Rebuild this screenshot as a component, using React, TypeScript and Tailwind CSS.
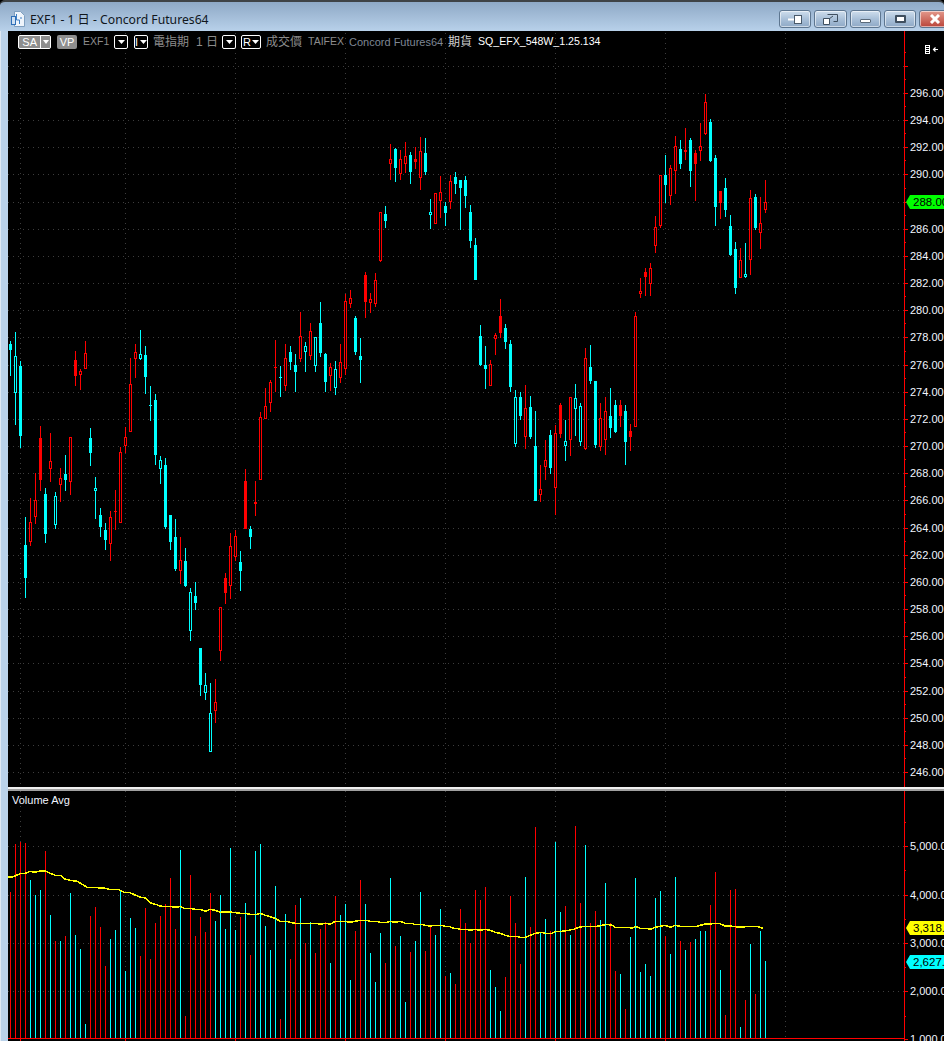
import React from "react";

type C = [string, number, number, number, number];
const candles: C[] = [
["C",341,344,350,376],["c",332,356,393,425],["C",361,366,436,448],["C",517,545,578,598],["r",498,522,542,546],["r",473,500,517,524],["R",426,438,480,491],["C",488,494,534,543],["r",433,461,469,482],["c",492,496,525,529],
["r",468,478,485,502],["C",455,474,480,491],["r",437,437,482,495],["R",351,360,376,386],["r",369,371,375,390],["r",341,353,369,369],["C",428,438,453,466],["c",477,488,491,519],["C",508,515,527,537],["C",523,530,540,550],
["r",511,517,544,561],["R",490,511,512,530],["r",447,452,523,523],["r",427,437,446,453],["r",358,384,432,432],["r",344,352,359,378],["c",330,354,359,360],["C",346,355,377,394],["C",386,405,406,421],["C",394,400,455,465],
["c",456,460,469,484],["C",458,465,527,529],["C",515,515,542,550],["C",519,537,569,571],["r",537,560,571,584],["C",548,561,586,587],["c",588,592,631,641],["C",582,596,603,610],["C",648,648,685,696],["c",673,685,693,700],
["c",683,713,752,752],["r",679,702,711,723],["r",607,607,651,661],["R",573,578,593,604],["r",533,546,586,599],["r",530,536,557,561],["C",551,562,571,591],["R",469,481,529,529],["C",526,529,537,549],["R",481,502,504,516],
["r",412,417,480,480],["r",388,406,419,419],["r",380,382,403,412],["R",340,367,368,392],["C",366,377,378,397],["r",344,358,386,391],["C",346,352,362,370],["C",354,365,372,392],["r",312,336,359,362],["c",342,346,352,372],
["r",323,331,356,360],["c",337,337,366,372],["C",302,323,353,357],["C",353,354,382,392],["r",363,367,376,391],["c",361,369,388,395],["r",344,362,378,383],["r",294,301,369,375],["r",290,298,304,308],["C",316,318,352,355],
["C",338,356,360,383],["R",272,275,302,318],["r",293,299,303,313],["r",273,280,304,307],["r",212,212,261,262],["C",206,214,221,228],["r",144,159,164,180],["C",148,149,168,182],["r",150,159,174,180],["r",142,156,164,173],
["C",152,155,172,184],["R",147,159,162,169],["r",137,151,178,190],["C",138,153,172,175],["c",199,212,215,229],["r",193,193,224,224],["r",176,192,201,218],["C",202,206,213,226],["r",175,181,202,209],["C",172,177,184,194],
["C",180,180,188,230],["C",176,180,196,208],["C",205,212,241,248],["C",238,245,280,280],["C",325,336,365,366],["C",346,365,369,389],["r",360,364,386,386],["r",333,335,339,355],["R",299,316,333,338],["C",324,328,342,349],
["C",340,344,387,392],["c",390,397,444,447],["C",392,397,416,420],["r",385,408,437,449],["C",396,407,437,439],["C",411,446,501,501],["r",465,489,495,502],["r",440,460,467,480],["C",430,435,468,474],["r",425,433,488,515],
["R",403,405,434,438],["c",420,441,446,461],["r",397,397,440,456],["c",384,398,409,436],["c",403,406,442,446],["r",348,358,449,450],["C",345,367,381,384],["C",381,381,445,448],["r",403,418,447,451],["r",397,411,440,455],
["C",388,416,428,438],["C",400,405,432,433],["R",400,405,416,427],["C",405,411,442,465],["R",424,431,437,451],["r",312,316,427,427],["r",278,291,294,298],["R",268,272,277,296],["r",263,268,284,296],["r",216,227,246,253],
["r",175,175,226,228],["C",155,175,185,203],["r",165,168,196,205],["r",136,146,171,194],["C",140,149,164,169],["R",128,150,152,160],["C",138,140,171,187],["R",150,153,164,201],["r",123,146,151,161],["r",94,102,134,135],
["C",119,122,161,162],["C",155,158,207,226],["R",191,191,203,219],["C",178,188,210,217],["C",215,226,255,256],["C",242,249,288,294],["r",248,260,278,278],["c",243,274,277,278],["r",190,198,260,275],["C",194,197,228,230],
["r",197,223,233,249],["r",180,202,210,213],
];

const volA =
  "r336 r192 r186 r189 c300 c345 c330 r213 c405 r483 c483 r468 c339 c465 c507 c732 r408 r381 r441 r558 c477 c450 c330 c573 c414 c444 r528 r384 r537 r429 r408 r372 r294 r447 c210 r708 r285 r468 r411 r456 r339 c423 c345 c447 c204 c450 r411 c369 r525 c213 c192 c438 c510 c318 r717 c402 r537";
const volB =
  "r255 c234 r369 c306 r399 r327 r306 c429 r228 c285 c252 c480 r333 r180 c252 c399 c486 c339 r429 c174 r378 c348 c546 r396 c363 c216 r393 r318 c345 c267 r468 c459 r492 r267 r309 r369 r210 r240 r201 c450 c501 c573 r471 r228 r309 r432 c171 r321 r21 c339 c297 r333 c66 c276 r258 c345 r18 r249 c75 r309 r273 c300 c189 r309 r453 c462 r567 c351 c174 c456 c432 c468 c234 c213 r348 c402 c171 r363 c390 r366 c357 c333";
const volC = "c453 r375 r276 c570 r705 r330 r327 c741 r660 c492 r642 c453 c543";

const parse = (s: string, base: number, start: number) =>
  s.split(" ").map((t, i) => ({
    x: start + i * 5,
    red: t[0] === "r",
    y: Math.round(base + Number(t.slice(1)) / 3),
  }));
const volumes = [...parse(volA, 780, 10), ...parse(volB, 820, 295), ...parse(volC, 780, 705)];

const avgA = [24,292,40,290,61,281,76,280,91,274,106,277,120,273,136,273,151,280,166,286,181,286,196,298,211,301,232,304,247,313,262,322,290,323,316,325,330,329,355,328,372,337,390,338,405,345,420,351,436,354,451,368,466,373,481,378,496,380,516,380,531,382,540,379,556,386,571,385,586,388,601,388,616,394,631,388,646,391,661,397,681,396,700,397,721,400,736,400,750,403,770,403,781,400,796,406,811,410,826,415,841,424,860,424,871,427,884,430];
const avgB = [0,310,66,310,76,313,91,310,106,313,121,304,151,304,166,307,181,304,196,301,216,301,226,304,246,304,256,307,276,307,286,304,301,307,316,304,331,310,351,310,356,313,381,313,391,316,406,319,416,316,441,316,451,319,461,319,476,325,486,325,496,328,516,328,526,331,541,328,556,331,571,328,586,331,601,337,616,340,631,346,641,349,666,349,676,352,691,352,706,346,721,340,741,337,751,340,771,340,781,334,801,334,821,331,836,328,851,322,866,319,906,319,921,316,936,313,951,316,961,322,1001,322,1011,325,1021,319,1036,325,1056,325,1066,328,1081,322,1096,319,1111,316,1126,322,1141,316,1156,319,1206,319,1216,316,1230,313];
const avgC = [10,433,40,431,60,431,75,438,100,439,120,442,145,439,170,439,190,445];
const pts = (a: number[], ox: number, oy: number) => {
  const out: string[] = [];
  for (let i = 0; i < a.length; i += 2) out.push(`${(ox + a[i] / 3).toFixed(1)},${(oy + a[i + 1] / 3).toFixed(1)}`);
  return out;
};
const avgLine = [...pts(avgA, 0, 780), ...pts(avgB, 295, 820), ...pts(avgC, 700, 780)].join(" ");

const gridX = [20, 125, 235, 345, 445, 555, 665, 785];
const RED = "#ff0000";
const CYAN = "#00ffff";
const GRID = "#3d3d3d";
const AXIS_FONT = "'Liberation Sans', sans-serif";

const priceY = (p: number) => Math.round(93 + ((296 - p) / 2) * 27.16);
const prices = Array.from({ length: 26 }, (_, i) => 296 - i * 2);

function Flag({ y, color, text }: { y: number; color: string; text: string }) {
  return (
    <g>
      <polygon points={`906,${y} 910,${y - 7} 944,${y - 7} 944,${y + 7} 910,${y + 7}`} fill={color} />
      <text x={913} y={y + 4} fontSize={11.5} fill="#000" fontFamily={AXIS_FONT}>
        {text}
      </text>
    </g>
  );
}

function PriceChart() {
  return (
    <svg width={936} height={756} viewBox="8 31 936 756" className="block">
      <g shapeRendering="crispEdges" stroke={GRID} strokeDasharray="1 4">
        {gridX.map((x) => (
          <line key={x} x1={x + 0.5} x2={x + 0.5} y1={33} y2={787} />
        ))}
        {[298, ...prices].map((p) => (
          <line key={p} x1={8} x2={904} y1={priceY(p) + 0.5} y2={priceY(p) + 0.5} />
        ))}
      </g>
      <g shapeRendering="crispEdges">
        {candles.map((c, i) => {
          const x = 10 + i * 5;
          const col = c[0] === "r" || c[0] === "R" ? RED : CYAN;
          const hollow = c[0] === "r" || c[0] === "c";
          const h = Math.max(1, c[3] - c[2]);
          return (
            <g key={i}>
              <rect x={x} y={c[1]} width={1} height={c[4] - c[1]} fill={col} />
              <rect x={x - 1} y={c[2]} width={3} height={h} fill={col} />
              {hollow && h > 2 && <rect x={x} y={c[2] + 1} width={1} height={h - 2} fill="#000" />}
            </g>
          );
        })}
      </g>
      <g shapeRendering="crispEdges" fill={RED}>
        <rect x={904} y={31} width={1} height={756} />
        {[298, ...prices].map((p) => (
          <rect key={p} x={904} y={priceY(p)} width={4} height={1} />
        ))}
        {[298, ...prices].map((p) => (
          <rect key={p} x={904} y={priceY(p) - 14} width={2} height={1} />
        ))}
      </g>
      {prices
        .filter((p) => p !== 288)
        .map((p) => (
          <text key={p} x={910} y={priceY(p) + 4} fontSize={11} fill="#f2f6ff" fontFamily={AXIS_FONT}>
            {p}.00
          </text>
        ))}
      <Flag y={202} color="#00ff00" text="288.00" />
      <g fill="none" stroke="#fff" strokeWidth={1} shapeRendering="crispEdges">
        <rect x={925.5} y={45.5} width={4} height={8} />
        <path d="M926 47.5h3M926 49.5h3M926 51.5h3" />
      </g>
      <path d="M934 49.5h4M935.5 47.5l-2 2 2 2" fill="none" stroke="#fff" strokeWidth={1.2} />
    </svg>
  );
}

function VolumeChart() {
  const ys = [846, 895, 943, 991, 1039];
  return (
    <svg width={936} height={250} viewBox="8 791 936 250" className="block">
      <g shapeRendering="crispEdges" stroke={GRID} strokeDasharray="1 4">
        {gridX.map((x) => (
          <line key={x} x1={x + 0.5} x2={x + 0.5} y1={791} y2={1038} />
        ))}
        {ys.slice(0, 4).map((y) => (
          <line key={y} x1={8} x2={904} y1={y + 0.5} y2={y + 0.5} />
        ))}
      </g>
      <g shapeRendering="crispEdges">
        {volumes.map((v) => (
          <rect key={v.x} x={v.x} y={v.y} width={1} height={1038 - v.y} fill={v.red ? RED : CYAN} />
        ))}
      </g>
      <polyline points={avgLine} fill="none" stroke="#ffff00" strokeWidth={1.5} shapeRendering="crispEdges" />
      <g shapeRendering="crispEdges" fill={RED}>
        <rect x={904} y={791} width={1} height={250} />
        <rect x={8} y={1038} width={896} height={1} />
        {gridX.slice(0, 7).map((x) => (
          <rect key={x} x={x} y={1038} width={1} height={3} />
        ))}
        {ys.map((y) => (
          <rect key={y} x={904} y={y} width={4} height={1} />
        ))}
        {[822, 870, 919, 967, 1016].map((y) => (
          <rect key={y} x={904} y={y} width={2} height={1} />
        ))}
      </g>
      {["5,000.0", "4,000.0", "3,000.0", "2,000.0", "1,000.0"].map((t, i) => (
        <text key={t} x={910} y={ys[i] + 4} fontSize={11} fill="#f2f6ff" fontFamily={AXIS_FONT}>
          {t}
        </text>
      ))}
      <Flag y={928} color="#ffff00" text="3,318.4" />
      <Flag y={962} color="#00ffff" text="2,627.0" />
      <text x={12} y={804} fontSize={11} fill="#f2f6ff" fontFamily={AXIS_FONT}>
        Volume Avg
      </text>
    </svg>
  );
}

function DropBox({ label }: { label?: string }) {
  return (
    <span
      className={`flex h-[14px] items-center justify-center rounded-[2px] border border-white bg-black text-[11px] leading-none text-white ${
        label === "R" ? "w-[20px]" : "w-[14px]"
      }`}
    >
      {label && <span className={label === "R" ? "mr-px" : "mr-[2px]"}>{label}</span>}
      <svg width={7} height={4} viewBox="0 0 7 4">
        <path d="M0 0h7L3.5 4z" fill="#fff" />
      </svg>
    </span>
  );
}

function Toolbar() {
  return (
    <div className="absolute left-[10px] top-[4px] flex h-[14px] items-center whitespace-nowrap font-['Liberation_Sans','Noto_Sans_CJK_TC',sans-serif] text-[10.5px] text-[#8c8c8c]">
      <span className="flex h-[14px] w-[33px] items-stretch overflow-hidden rounded-[2px] border border-white bg-[#8e8e8e] text-[11px] leading-[12px] text-white">
        <span className="w-[22px] text-center">SA</span>
        <span className="flex w-[10px] items-center justify-center border-l border-white bg-[#8e8e8e]">
          <svg width={6} height={4} viewBox="0 0 6 4">
            <path d="M0 0h6L3 4z" fill="#fff" />
          </svg>
        </span>
      </span>
      <span className="ml-[6px] h-[14px] w-[20px] rounded-[2px] bg-[#8e8e8e] text-center text-[11px] leading-[14px] text-white">VP</span>
      <span className="ml-[6px] w-[25px]">EXF1</span>
      <span className="ml-[6px]"><DropBox /></span>
      <span className="ml-[6px]"><DropBox label="I" /></span>
      <span className="ml-[5px] w-[37px] text-[12px]">電指期</span>
      <span className="ml-[6px] w-[20px] text-[12px]">1 日</span>
      <span className="ml-[6px]"><DropBox /></span>
      <span className="ml-[5px]"><DropBox label="R" /></span>
      <span className="ml-[5px] w-[36px] text-[12px]">成交價</span>
      <span className="ml-[6px] w-[35px]">TAIFEX</span>
      <span className="ml-[6px] w-[93px] text-[11px] text-[#7f8794]">Concord Futures64</span>
      <span className="ml-[6px] w-[24px] text-[12px] text-[#d0d0d0]">期貨</span>
      <span className="ml-[6px] text-[10.6px] text-white">SQ_EFX_548W_1.25.134</span>
    </div>
  );
}

function WinBtn({ children, w, danger }: { children: React.ReactNode; w: string; danger?: boolean }) {
  return (
    <span
      className={`flex h-[18px] items-center justify-center rounded-[3px] border border-[#5d7690] shadow-[inset_0_0_0_1px_rgba(255,255,255,0.55)] ${w} ${
        danger ? "bg-gradient-to-b from-[#e3998c] to-[#b9433a]" : "bg-gradient-to-b from-[#cfdeed] via-[#a9c0d8] to-[#8fa9c6]"
      }`}
    >
      {children}
    </span>
  );
}

function TitleBar() {
  return (
    <div className="flex h-[31px] shrink-0 items-start rounded-t-[5px] border-t-2 border-[#3f4346] bg-gradient-to-b from-[#8fa9c6] to-[#b8d1ea] pl-[11px]">
      <svg width={14} height={16} viewBox="0 0 14 16" className="mt-[9px]">
        <path d="M3.5.5h6l4 4v11h-10z" fill="#eef4fb" stroke="#7f9fbf" />
        <path d="M5.5 3v6h3v4M9 7h2" stroke="#3f7fc4" strokeWidth={1} fill="none" />
        <rect x={0.5} y={5.5} width={4} height={8} fill="#cfe0f2" stroke="#2f6fb8" />
      </svg>
      <span className="ml-[5px] mt-[9px] font-['Noto_Sans','Noto_Sans_CJK_TC',sans-serif] text-[12.2px] leading-[17px] text-[#10161c]">
        EXF1 - 1 日 - Concord Futures64
      </span>
      <div className="ml-auto mt-[8px] flex gap-[3px]">
        <WinBtn w="w-[32px]">
          <svg width={15} height={11} viewBox="0 0 15 11">
            <path d="M0 5.5h6" stroke="#fff" strokeWidth={2} />
            <rect x={6.5} y={1.5} width={7} height={8} fill="#fff" stroke="#4a5a6a" />
          </svg>
        </WinBtn>
        <WinBtn w="w-[33px]">
          <svg width={15} height={12} viewBox="0 0 15 12" fill="none" stroke="#3f4f5f">
            <path d="M4.5 1.5h10v7h-4" />
            <path d="M.5 5.5h6v6h-6z" fill="#fff" />
            <path d="M6 6l4-3" />
          </svg>
        </WinBtn>
        <WinBtn w="w-[31px]">
          <span className="mt-[4px] h-[4px] w-[11px] rounded-[1px] border border-[#5a6a7a] bg-white" />
        </WinBtn>
        <WinBtn w="w-[32px]">
          <span className="h-[8px] w-[11px] rounded-[1px] border-2 border-[#3f4f5f] bg-white" />
        </WinBtn>
        <WinBtn w="w-[32px] mr-[-7px]" danger>
          <svg width={12} height={10} viewBox="0 0 12 10">
            <path d="M2 1l8 8M10 1L2 9" stroke="#fff" strokeWidth={3} />
          </svg>
        </WinBtn>
      </div>
    </div>
  );
}

export default function App() {
  return (
    <div className="flex h-[1041px] w-[944px] flex-col overflow-hidden bg-black">
      <TitleBar />
      <div className="flex min-h-0 flex-1">
        <div className="w-[8px] shrink-0 border-l border-[#dfe9f4] bg-[#bad2ea]" />
        <div className="flex min-w-0 flex-1 flex-col">
          <div className="relative h-[756px] shrink-0">
            <PriceChart />
            <Toolbar />
          </div>
          <div className="h-[4px] shrink-0 border-b-2 border-[#a0a0a0] bg-[#eeeeee]" />
          <div className="flex-1">
            <VolumeChart />
          </div>
        </div>
      </div>
    </div>
  );
}
